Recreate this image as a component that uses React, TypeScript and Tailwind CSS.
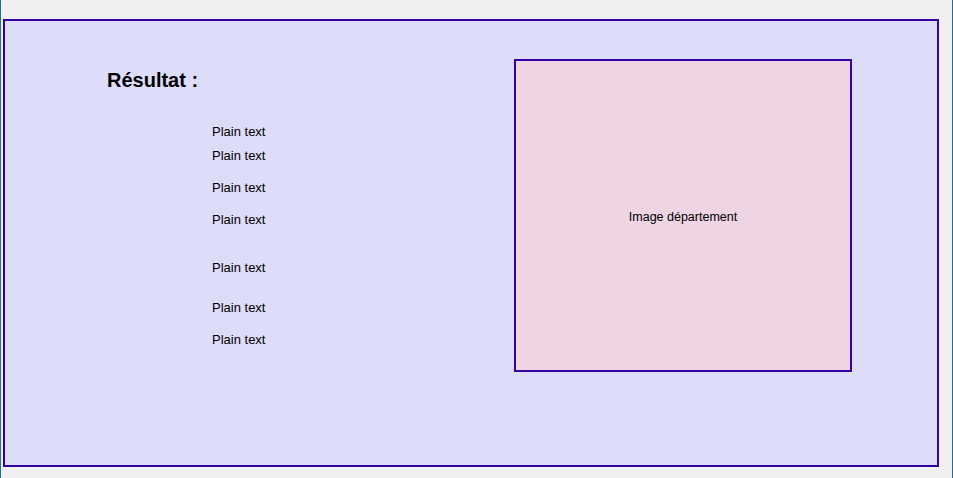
const rows = [
  { label: "Plain text", gap: "mt-[32px]" },
  { label: "Plain text", gap: "mt-[9px]" },
  { label: "Plain text", gap: "mt-[17px]" },
  { label: "Plain text", gap: "mt-[17px]" },
  { label: "Plain text", gap: "mt-[33px]" },
  { label: "Plain text", gap: "mt-[25px]" },
  { label: "Plain text", gap: "mt-[17px]" },
];

export default function App() {
  return (
    <div
      className="w-[953px] h-[478px] bg-[#f0f0f0] border-x border-[#1b6f9a] overflow-hidden"
      style={{ fontFamily: '"Liberation Sans", Arial, sans-serif' }}
    >
      <div className="ml-[2px] mt-[19px] w-[936px] h-[448px] border-2 border-[#3400a2] bg-[#dddcf9] flex">
        <div className="w-[509px] flex flex-col">
          <h1 className="ml-[102px] mt-[48px] text-[20px] leading-[23px] font-bold text-black">Résultat :</h1>
          <div className="ml-[207px] flex flex-col">
            {rows.map((row, i) => (
              <span key={i} className={`${row.gap} text-[13px] leading-[15px] text-black`}>
                {row.label}
              </span>
            ))}
          </div>
        </div>
        <div className="mt-[38px] w-[338px] h-[313px] border-2 border-[#3400a2] bg-[#efd4e3] flex items-center justify-center">
          <span className="mt-[2px] text-[12.5px] leading-[14px] text-black">Image département</span>
        </div>
      </div>
    </div>
  );
}
